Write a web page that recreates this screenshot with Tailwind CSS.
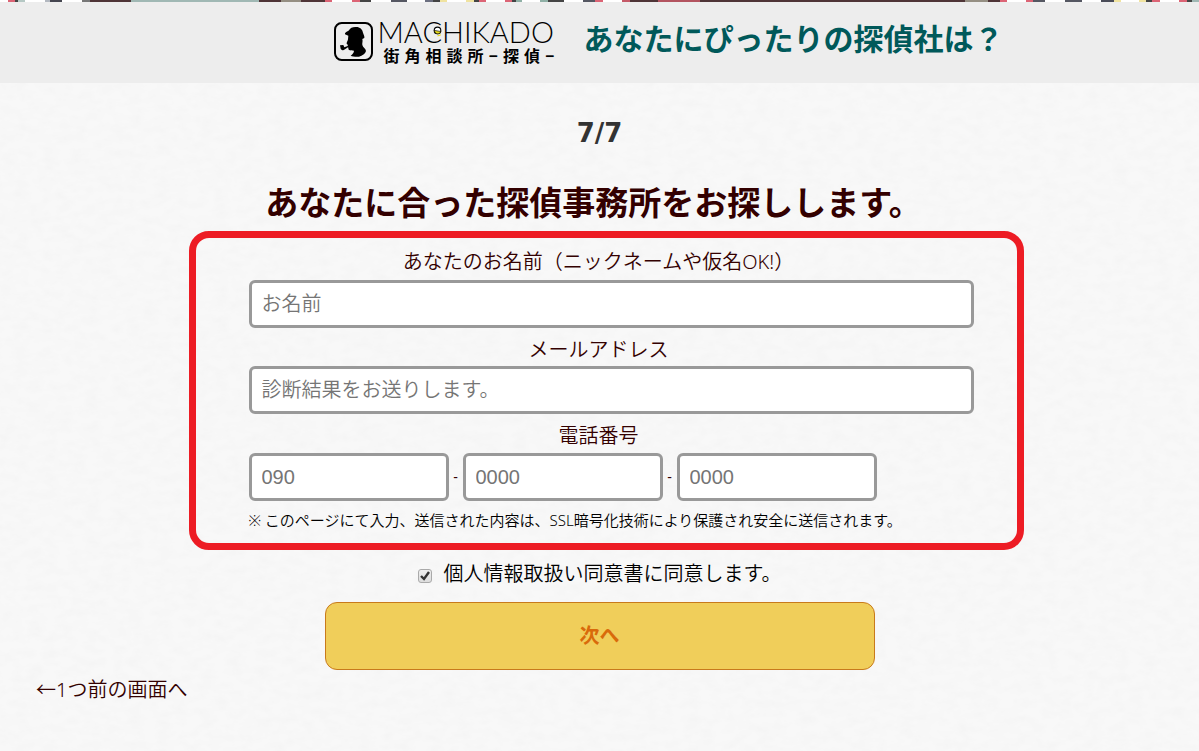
<!DOCTYPE html>
<html lang="ja">
<head>
  <meta charset="UTF-8" />
  <meta name="viewport" content="width=device-width, initial-scale=1" />
  <title>街角相談所-探偵-</title>
  <script src="https://cdn.jsdelivr.net/npm/@tailwindcss/browser@4"></script>
</head>
<body class="relative min-h-screen overflow-x-hidden bg-[#f8f8f8] font-['Noto_Sans','Noto_Sans_CJK_JP',sans-serif] text-[#330000]">
  <!-- Paper texture -->
  <svg class="absolute inset-0 -z-10 h-full w-full" aria-hidden="true">
    <filter id="paper">
      <feTurbulence type="fractalNoise" baseFrequency="0.07 0.12" numOctaves="3" seed="4" />
      <feColorMatrix values="0 0 0 0 0.5  0 0 0 0 0.5  0 0 0 0 0.5  0.1 0 0 0 -0.035" />
    </filter>
    <rect width="100%" height="100%" filter="url(#paper)" />
  </svg>

  <!-- Header -->
  <header class="h-[83px] bg-[#ededed]">
    <svg id="strip" class="block h-[2px] w-full" viewBox="0 0 1199 2" preserveAspectRatio="none" aria-hidden="true"></svg>
    <div class="flex justify-center pl-[138px] pt-4">
      <a href="#" class="flex w-[220px] shrink-0 gap-[5px] text-black">
        <svg class="mt-1 h-[39px] w-[39px] shrink-0" viewBox="0 0 117 117" aria-hidden="true">
          <rect x="3" y="3" width="111" height="111" rx="20" fill="none" stroke="#000" stroke-width="6" />
          <path d="M33 34C36 29 42 28 45 25C48 17 58 14 67 15C78 15 85 22 87 32C89 39 92 42 91 48L85 51C87 58 84 63 85 69C87 77 95 79 96 87C94 96 85 101 75 104C68 105 55 104 50 101C55 97 60 92 60 86C55 85 49 86 45 84C42 82 44 78 42 76L33 82C30 86 22 85 20 80L18 70L28 69L31 76L41 72C43 67 39 67 38 65C37 62 42 56 42 52L43 41L33 37Z" fill="#000" />
        </svg>
        <div>
          <div class="relative font-[Lato] text-[29px] font-light leading-7">MACHIKADO
            <svg class="absolute left-[55px] top-[8px] h-[11px] w-[9px]" viewBox="0 0 8 10" aria-hidden="true">
              <circle cx="4" cy="4" r="3" fill="#fff" stroke="#000" />
              <path d="M1 4L7 5C6 8 2 8 1 4Z" fill="#e9dc18" stroke="#000" stroke-width=".6" />
              <path d="M4 9L7 8" stroke="#e9dc18" />
            </svg>
          </div>
          <div class="flex gap-[5px] pl-[6px] text-base font-bold leading-5">
            <span>街</span><span>角</span><span>相</span><span>談</span><span>所</span><span>−</span><span>探</span><span>偵</span><span>−</span>
          </div>
        </div>
      </a>
      <p class="ml-[30px] whitespace-nowrap text-[30px] font-bold leading-[42px] text-[#00595a]">あなたにぴったりの探偵社は？</p>
    </div>
  </header>

  <!-- Form -->
  <main>
    <p class="pt-8 text-center font-['DejaVu_Sans'] text-[26px] font-bold leading-9 text-[#333]">7/7</p>
    <h1 class="mt-7 pr-3 text-center text-[33px] font-bold leading-12">あなたに合った探偵事務所をお探しします。</h1>

    <form class="mx-auto max-w-[700px]">
      <div class="-ml-[61px] -mr-[74px] mt-1 rounded-[20px] border-[7px] border-[#ed1c24] pb-3 pl-[53px] pr-[43px] pt-2 text-xl">
        <label for="name" class="block pr-[25px] text-center font-[350] leading-8">あなたのお名前（ニックネームや仮名OK!）</label>
        <input id="name" type="text" placeholder="お名前" class="mt-[2px] block h-12 w-full rounded-md border-3 border-[#999] bg-white px-[10px] pb-[2px] font-[350] placeholder:text-[#757575]" />
        <label for="mail" class="mt-2 block pr-[25px] text-center font-[350] leading-7">メールアドレス</label>
        <input id="mail" type="email" placeholder="診断結果をお送りします。" class="mt-[2px] block h-12 w-full rounded-md border-3 border-[#999] bg-white px-[10px] pb-[2px] font-[350] placeholder:text-[#757575]" />
        <label for="tel1" class="mt-2 block pr-[25px] text-center font-[350] leading-7">電話番号</label>
        <div class="mt-[3px] flex items-center font-['Liberation_Sans']">
          <input id="tel1" type="tel" placeholder="090" class="h-12 w-[200px] rounded-md border-3 border-[#999] bg-white px-[10px] placeholder:text-[#757575]" />
          <span class="w-[14px] text-center text-sm">-</span>
          <input type="tel" aria-label="電話番号 2" placeholder="0000" class="h-12 w-[200px] rounded-md border-3 border-[#999] bg-white px-[10px] placeholder:text-[#757575]" />
          <span class="w-[14px] text-center text-sm">-</span>
          <input type="tel" aria-label="電話番号 3" placeholder="0000" class="h-12 w-[200px] rounded-md border-3 border-[#999] bg-white px-[10px] placeholder:text-[#757575]" />
        </div>
        <p class="mt-2 text-[15px] font-[350] leading-[22px] text-black">※ このページにて入力、送信された内容は、SSL暗号化技術により保護され安全に送信されます。</p>
      </div>

      <label class="mt-2 flex items-center justify-center gap-3 text-xl font-[350] leading-8 text-black">
        <input type="checkbox" checked class="peer sr-only" />
        <span class="mt-1 grid h-[14px] w-[14px] place-items-center rounded-[3px] border border-[#aaa] bg-gradient-to-b from-[#eee] to-[#ddd] *:invisible peer-checked:*:visible">
          <svg class="h-[10px] w-[10px]" viewBox="0 0 10 10" aria-hidden="true"><path d="M1 5L4 8L9 1" fill="none" stroke="#333" stroke-width="2.4" /></svg>
        </span>
        個人情報取扱い同意書に同意します。
      </label>
      <button type="button" class="mx-auto mt-3 block h-[68px] w-[550px] max-w-full rounded-xl border border-[#c87a1c] bg-[#f0ce5a] text-xl font-bold text-[#d96a0a]">次へ</button>
    </form>

    <a href="#" class="ml-9 mt-1 inline-block text-xl font-[350] leading-8">←1つ前の画面へ</a>
  </main>

  <script>
    // Pattern along the top edge: [end x, colour]
    const bands = [
      [8, "#fff"], [15, "#dc6475"], [18, "#444"], [25, "#b5c8c4"], [45, "#fff"], [50, "#b3b8c0"], [62, "#454650"], [82, "#fff"], [90, "#777"],
      [131, "#4f3537"], [259, "#a0b8b4"], [281, "#4f3537"], [301, "#958f83"], [325, "#4f3537"], [332, "#dc6475"], [352, "#fff"],
      [360, "#dc6475"], [371, "#444"], [391, "#fff"], [407, "#555762"], [425, "#fff"], [433, "#6c6f80"], [440, "#444"], [447, "#f0e3a0"],
      [466, "#fff"], [474, "#f0e3a0"], [479, "#444"], [486, "#dc6475"], [505, "#fff"], [512, "#dc6475"], [516, "#444"], [522, "#8fb0a6"],
      [540, "#fff"], [548, "#8fb0a6"], [564, "#444"], [583, "#fff"], [595, "#555762"], [603, "#dc6475"], [622, "#fff"], [630, "#c55a68"],
      [658, "#4f3537"], [700, "#b35460"], [965, "#4f3537"], [988, "#958f83"], [1000, "#4f3537"], [1007, "#dc6475"], [1026, "#fff"],
      [1033, "#dc6475"], [1045, "#555762"], [1065, "#fff"], [1082, "#555762"], [1101, "#fff"], [1114, "#4a4c58"], [1121, "#f0e3a0"],
      [1139, "#fff"], [1146, "#f0e3a0"], [1152, "#444"], [1160, "#dc6475"], [1179, "#fff"], [1187, "#dc6475"], [1192, "#444"], [1199, "#a0b8b4"],
    ];
    let x = 0;
    document.getElementById("strip").innerHTML = bands.map(([end, color]) => {
      const rect = `<rect x="${x}" width="${end - x}" height="2" fill="${color}" />`;
      x = end;
      return rect;
    }).join("");
  </script>
</body>
</html>
